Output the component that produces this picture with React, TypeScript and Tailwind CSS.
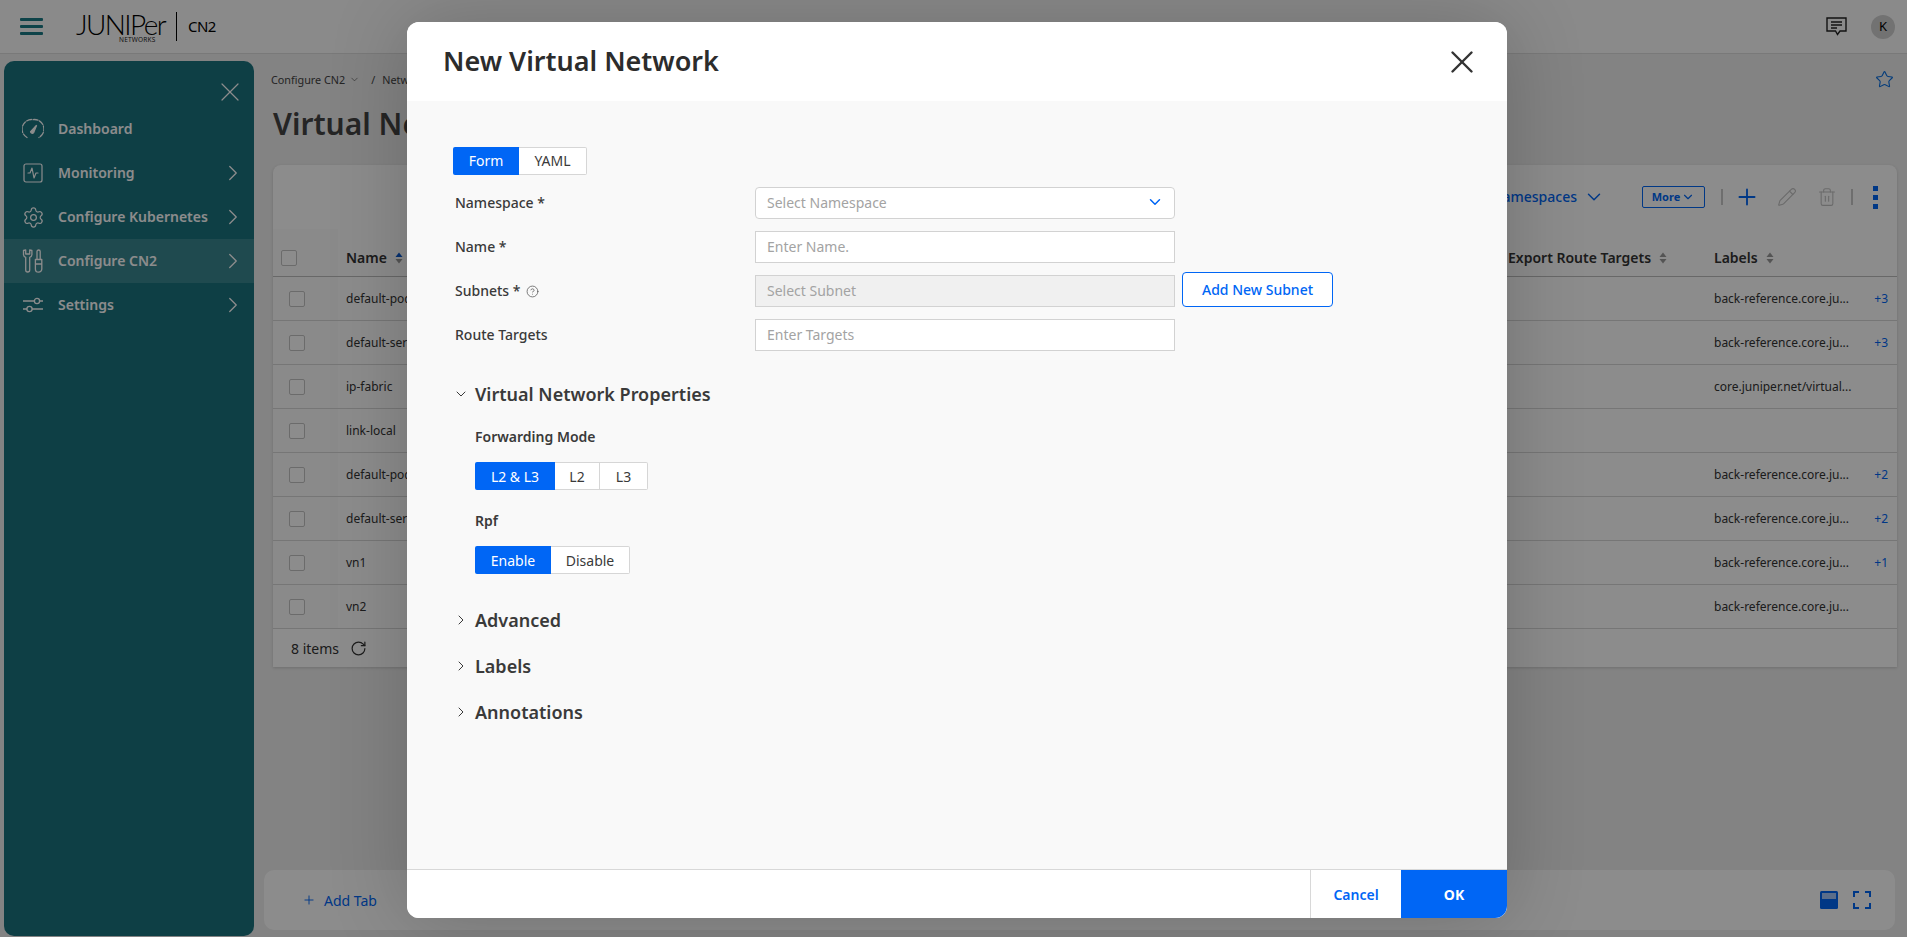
import React from "react";
import { X, ChevronRight, ChevronDown, Plus, Pencil, Trash2, Star, RotateCw, CircleHelp, SquareActivity, Settings } from "lucide-react";

const font = { fontFamily: '"Noto Sans", sans-serif' };

function Gauge() {
  return (
    <svg width="22" height="22" viewBox="0 0 22 22" fill="none" stroke="currentColor" strokeWidth="1.3" strokeLinecap="round">
      <path d="M5 19.5A9.6 9.6 0 0 1 11 1.6a9.6 9.6 0 0 1 6 17.9" strokeDasharray="5 1.6" />
      <path d="M8.6 13.6 14.6 7.2l-3 7.4a1.7 1.7 0 0 1-3-1z" fill="currentColor" />
    </svg>
  );
}
function Tools() {
  return (
    <svg width="22" height="24" viewBox="0 0 22 24" fill="none" stroke="currentColor" strokeWidth="1.3" strokeLinejoin="round">
      <path d="M1.5 1.5v4.2a3 3 0 0 0 2.2 2.6V21a2 2 0 0 0 4 0V8.3a3 3 0 0 0 2.2-2.6V1.5L7.7 1v4H3.7V1z" />
      <path d="M16.6 1a1.6 1.6 0 0 1 1.6 1.6v7.9H15V2.6A1.6 1.6 0 0 1 16.6 1zM13.4 10.5h6.4V20a3.2 3.2 0 0 1-6.4 0zM13.4 15h6.4" />
    </svg>
  );
}
function Sliders() {
  return (
    <svg width="22" height="16" viewBox="0 0 22 16" fill="none" stroke="currentColor" strokeWidth="1.3">
      <path d="M1 4h11M18 4h3M1 12h4M10 12h11" />
      <circle cx="15" cy="4" r="2.6" />
      <circle cx="7.5" cy="12" r="2.6" />
    </svg>
  );
}
function Sort({ active }: { active?: boolean }) {
  return (
    <svg width="8" height="12" viewBox="0 0 8 12" className="ml-2 shrink-0">
      <path d="M4 0.5 7.5 5H.5z" fill={active ? "#0a5ad0" : "#999999"} />
      <path d="M4 11.5.5 7h7z" fill="#999999" />
    </svg>
  );
}
function Box() {
  return <span className="block h-4 w-4 rounded-[2px] border border-[#c4c4c4] bg-white" />;
}

const nav = [
  { label: "Dashboard", icon: <Gauge />, arrow: false },
  { label: "Monitoring", icon: <SquareActivity size={24} strokeWidth={1.2} className="-ml-[1px]" />, arrow: true },
  { label: "Configure Kubernetes", icon: <Settings size={23} strokeWidth={1.3} />, arrow: true },
  { label: "Configure CN2", icon: <Tools />, arrow: true, active: true },
  { label: "Settings", icon: <Sliders />, arrow: true },
];

const rows = [
  ["default-pod-network", "back-reference.core.ju...", "+3"],
  ["default-service-network", "back-reference.core.ju...", "+3"],
  ["ip-fabric", "core.juniper.net/virtual...", ""],
  ["link-local", "", ""],
  ["default-pod-network-v6", "back-reference.core.ju...", "+2"],
  ["default-service-network-v6", "back-reference.core.ju...", "+2"],
  ["vn1", "back-reference.core.ju...", "+1"],
  ["vn2", "back-reference.core.ju...", ""],
];

function Field({ label, placeholder, help, select, disabled, extra }: { label: string; placeholder: string; help?: boolean; select?: boolean; disabled?: boolean; extra?: boolean }) {
  return (
    <div className="flex h-8 items-center">
      <div className="flex w-[302px] items-center pb-[2px] pl-[2px] text-[14px] font-medium text-[#3a3a3a]">
        {label}
        {help && <CircleHelp size={13} strokeWidth={1.4} className="ml-[6px] mt-[3px] text-[#555555]" />}
      </div>
      <div className={`flex h-8 w-[420px] items-center justify-between border border-[#d2d2d2] pb-[2px] pl-[11px] pr-[10px] text-[14px] text-[#a3a3a3] ${select ? "rounded-[4px]" : ""} ${disabled ? "bg-[#f0f0f0]" : "bg-white"}`}>
        {placeholder}
        {select && <ChevronDown size={18} strokeWidth={2} className="text-[#0066f5]" />}
      </div>
      {extra && (
        <div className="ml-[7px] -mt-[4px] flex h-[35px] w-[151px] items-center justify-center rounded-[4px] border border-[#0066f5] bg-white text-[14px] font-medium text-[#0066f5]">
          Add New Subnet
        </div>
      )}
    </div>
  );
}

function Segments({ items }: { items: [string, number][] }) {
  return (
    <div className="flex h-7 w-fit">
      {items.map(([t, w], i) => (
        <div
          key={t}
          style={{ width: w }}
          className={`flex items-center justify-center text-[14px] ${
            i === 0
              ? "rounded-l-[2px] bg-[#0066f5] text-white"
              : `border-y border-r border-[#d6d6d6] bg-white text-[#3a3a3a] ${i === items.length - 1 ? "rounded-r-[2px]" : ""}`
          }`}
        >
          {t}
        </div>
      ))}
    </div>
  );
}

function Section({ title, open }: { title: string; open?: boolean }) {
  return (
    <div className="flex h-6 items-center text-[#3a3a3a]">
      <span className="flex w-[22px]">
        {open ? <ChevronDown size={16} strokeWidth={1.5} /> : <ChevronRight size={16} strokeWidth={1.5} />}
      </span>
      <span className="text-[18px] font-semibold">{title}</span>
    </div>
  );
}

export default function App() {
  return (
    <div style={font} className="relative h-[937px] w-[1907px] overflow-hidden bg-[#eeeeee] text-[#333333]">
      {/* Top bar */}
      <header className="flex h-[54px] items-center border-b border-[#dddddd] bg-[#fcfcfc] pl-5 pr-3">
        <div className="flex w-[23px] flex-col gap-[4px]">
          <span className="h-[3px] rounded-[1px] bg-[#1a7a86]" />
          <span className="h-[3px] rounded-[1px] bg-[#1a7a86]" />
          <span className="h-[3px] rounded-[1px] bg-[#1a7a86]" />
        </div>
        <div className="relative ml-[33px] h-[30px] w-[88px]">
          <span style={{ fontFamily: '"Lato", sans-serif' }} className="block text-[28px] font-light leading-[24px] tracking-[-1.6px] text-black">
            JUNIPer
          </span>
          <span className="absolute left-[43px] top-[24px] text-[6.5px] leading-[7px] tracking-[0.2px] text-[#222222]">NETWORKS</span>
        </div>
        <span className="ml-[12px] h-[29px] w-px bg-black" />
        <span className="ml-[11px] text-[15px] leading-none tracking-[-0.6px] text-black">CN2</span>
        <div className="ml-auto flex items-center">
          <svg width="21" height="19" viewBox="0 0 21 19" fill="none" stroke="#222222" strokeWidth="1.4">
            <path d="M1 1h19v13h-6l-2.5 3.5L9.5 14H1z" />
            <path d="M5 5h11M5 8h11M5 11h6" />
          </svg>
          <span className="ml-6 flex h-6 w-6 items-center justify-center rounded-full bg-[#d0d0d0] text-[13px] text-black">K</span>
        </div>
      </header>

      <div className="flex h-[883px]">
        {/* Sidebar */}
        <aside className="ml-1 mt-[7px] flex h-[875px] w-[250px] flex-col rounded-[10px] bg-[#1a737f] text-white">
          <div className="flex h-[46px] items-start justify-end pr-[8px] pt-[15px]">
            <X size={32} strokeWidth={0.9} />
          </div>
          <nav>
            {nav.map((n) => (
              <div key={n.label} className={`flex h-11 items-center pl-[18px] pr-[8px] ${n.active ? "bg-[#3a8791]" : ""}`}>
                <span className="flex w-9 justify-start">{n.icon}</span>
                <span className="pb-[2px] text-[14px] font-semibold">{n.label}</span>
                {n.arrow && <ChevronRight size={26} strokeWidth={1.2} className="ml-auto" />}
              </div>
            ))}
          </nav>
        </aside>

        {/* Main */}
        <main className="flex min-w-0 flex-1 flex-col pl-[10px] pr-3">
          <div className="flex h-[111px] flex-col pl-[7px]">
            <div className="flex items-center pt-[16px] text-[10.8px] leading-[18px] text-[#444444]">
              Configure CN2
              <ChevronDown size={11} strokeWidth={1.3} className="ml-1" />
              <span className="ml-[11px] mr-[7px]">/</span>
              Networks
              <Star size={19} strokeWidth={1.4} className="ml-auto mr-[1px] text-[#0a6fe0]" />
            </div>
            <h1 className="ml-[2px] mt-[17px] text-[30px] font-semibold leading-[36px] text-[#444444]">Virtual Networks</h1>
          </div>

          <section className="ml-[9px] h-[502px] w-[1624px] rounded-t-[8px] bg-white shadow-[0_1px_3px_rgba(0,0,0,0.15)]">
            <div className="flex h-[64px] items-center justify-end pr-[19px] text-[#0066f5]">
              <span className="pb-[2px] text-[14px] font-medium">All Namespaces</span>
              <ChevronDown size={22} strokeWidth={1.6} className="ml-[6px]" />
              <span className="ml-[37px] flex h-[22px] w-[63px] items-center justify-center gap-[1px] rounded-[2px] border border-[#0066f5] text-[11px] font-bold">
                More <ChevronDown size={14} strokeWidth={2} />
              </span>
              <span className="ml-4 h-4 w-[2px] bg-[#c8c8c8]" />
              <Plus size={26} strokeWidth={1.7} className="ml-[11px]" />
              <Pencil size={20} strokeWidth={1.3} className="ml-[17px] text-[#c2c2c2]" />
              <Trash2 size={20} strokeWidth={1.3} className="ml-[20px] text-[#c2c2c2]" />
              <span className="ml-[14px] h-4 w-[2px] bg-[#c8c8c8]" />
              <span className="ml-[20px] flex flex-col gap-[4px]">
                <span className="h-[5px] w-[5px] bg-[#0066f5]" />
                <span className="h-[5px] w-[5px] bg-[#0066f5]" />
                <span className="h-[5px] w-[5px] bg-[#0066f5]" />
              </span>
            </div>
            <div className="flex h-[48px] items-center border-b border-[#bdbdbd] text-[14px] font-semibold text-[#333333]">
              <span className="flex h-full w-[65px] items-center bg-[#fcfcfc] pl-2 pt-[10px]"><Box /></span>
              <span className="flex flex-1 items-center pl-2 pt-[10px]">Name<Sort active /></span>
              <span className="flex w-[206px] items-center pt-[10px]">Export Route Targets<Sort /></span>
              <span className="flex w-[183px] items-center pt-[10px]">Labels<Sort /></span>
            </div>
            {rows.map(([name, label, more]) => (
              <div key={name} className="flex h-11 items-center border-b border-[#d8d8d8] text-[12px] text-[#333333]">
                <span className="flex h-full w-[65px] items-center bg-[#fcfcfc] pl-4"><Box /></span>
                <span className="flex-1 whitespace-nowrap pl-2">{name}</span>
                <span className="flex w-[183px] items-center justify-between whitespace-nowrap pr-[9px]">
                  {label}
                  <span className="text-[#0066f5]">{more}</span>
                </span>
              </div>
            ))}
            <div className="flex h-[38px] items-center pl-[18px] text-[14px] text-[#333333]">
              8 items
              <RotateCw size={17} strokeWidth={1.7} className="ml-[11px]" />
            </div>
          </section>

          {/* Bottom tab bar */}
          <div className="mt-[203px] flex h-[60px] w-[1631px] items-center rounded-[10px] bg-white pl-[38px] pr-[24px] text-[#0066f5]">
            <Plus size={14} strokeWidth={1.6} />
            <span className="ml-2 text-[14px]">Add Tab</span>
            <svg className="ml-auto" width="18" height="18" viewBox="0 0 18 18">
              <rect x="0" y="0" width="18" height="18" rx="1.5" fill="#0066f5" />
              <rect x="2" y="2" width="14" height="6" fill="#ffffff" opacity="0.65" />
            </svg>
            <svg className="ml-[15px]" width="18" height="18" viewBox="0 0 18 18" fill="none" stroke="#0066f5" strokeWidth="2">
              <path d="M1 6V1h5M12 1h5v5M17 12v5h-5M6 17H1v-5" />
            </svg>
          </div>
        </main>
      </div>

      {/* Dim layer */}
      <div className="absolute inset-0 bg-black/45" />

      {/* Modal */}
      <div className="absolute left-[407px] top-[22px] flex h-[896px] w-[1100px] flex-col overflow-hidden rounded-[12px] bg-[#f9f9f9] shadow-[0_0_80px_rgba(0,0,0,0.2)]">
        <div className="flex h-[79px] shrink-0 items-center justify-between bg-white pl-[36px] pr-[26px]">
          <h2 className="pb-[2px] text-[27px] font-semibold leading-none text-[#2c2c2c]">New Virtual Network</h2>
          <X size={38} strokeWidth={1.55} className="text-[#333333]" />
        </div>

        <div className="flex flex-1 flex-col pl-[46px] pt-[46px]">
          <div className="flex h-7 w-fit">
            <div className="flex w-[66px] items-center justify-center rounded-l-[2px] bg-[#0066f5] pb-[2px] text-[14px] text-white">Form</div>
            <div className="flex w-[68px] items-center justify-center rounded-r-[2px] border border-l-0 border-[#d6d6d6] bg-white pb-[2px] text-[14px] text-[#3a3a3a]">YAML</div>
          </div>
          <div className="mt-3 flex flex-col gap-3">
            <Field label="Namespace *" placeholder="Select Namespace" select />
            <Field label="Name *" placeholder="Enter Name." />
            <Field label="Subnets *" placeholder="Select Subnet" help disabled extra />
            <Field label="Route Targets" placeholder="Enter Targets" />
          </div>

          <div className="mt-[31px]"><Section title="Virtual Network Properties" open /></div>
          <div className="pl-[22px]">
            <div className="mt-[21px] text-[14px] font-semibold leading-5 text-[#3a3a3a]">Forwarding Mode</div>
            <div className="mt-[15px]"><Segments items={[["L2 & L3", 80], ["L2", 45], ["L3", 48]]} /></div>
            <div className="mt-[21px] text-[14px] font-semibold leading-5 text-[#3a3a3a]">Rpf</div>
            <div className="mt-[15px]"><Segments items={[["Enable", 76], ["Disable", 79]]} /></div>
          </div>
          <div className="mt-[34px]"><Section title="Advanced" /></div>
          <div className="mt-[22px]"><Section title="Labels" /></div>
          <div className="mt-[22px]"><Section title="Annotations" /></div>
        </div>

        <div className="flex h-[49px] shrink-0 justify-end border-t border-[#d8d8d8] bg-white">
          <div className="flex w-[91px] items-center justify-center border-l border-[#d8d8d8] text-[14px] font-semibold text-[#0066f5]">Cancel</div>
          <div className="flex w-[106px] items-center justify-center bg-[#0066f5] text-[14px] font-bold text-white">OK</div>
        </div>
      </div>
    </div>
  );
}
